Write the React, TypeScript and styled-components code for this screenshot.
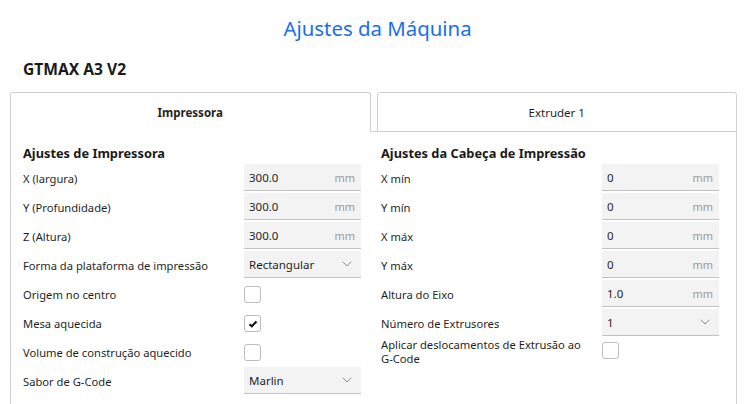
import React from "react";
import styled, { createGlobalStyle } from "styled-components";

const Global = createGlobalStyle`
  html, body { margin: 0; padding: 0; background: #ffffff; }
  body { font-family: "Noto Sans", "Open Sans", sans-serif; color: #1f1f1f; overflow: hidden; }
  * { box-sizing: border-box; }
`;

const Page = styled.div`
  width: 755px;
  height: 404px;
  overflow: hidden;
  display: flex;
  flex-direction: column;
`;

const Title = styled.h1`
  margin: 0;
  height: 56px;
  display: flex;
  align-items: center;
  justify-content: center;
  font-size: 20.4px;
  font-weight: 400;
  color: #196ef0;
`;

const Machine = styled.h2`
  margin: 0;
  padding-left: 23px;
  height: 28px;
  display: flex;
  align-items: center;
  font-size: 15.6px;
  font-weight: 700;
  color: #1a1a1a;
  position: relative;
  top: -1px;
`;

const Tabs = styled.div`
  margin: 8px 18px 0 10px;
  display: flex;
  gap: 6px;
  height: 40px;
`;

const Tab = styled.div<{ $active?: boolean }>`
  flex: 1;
  display: flex;
  align-items: center;
  justify-content: center;
  font-size: 11.5px;
  font-weight: ${(p) => (p.$active ? 700 : 400)};
  border: 1px solid #d0d0d0;
  border-bottom: ${(p) => (p.$active ? "none" : "1px solid #d0d0d0")};
  border-radius: 3px 3px 0 0;
  background: #fff;
  color: #1f1f1f;
`;

const Panel = styled.div`
  margin: 0 18px 0 10px;
  flex: 1;
  border-left: 1px solid #d0d0d0;
  border-right: 1px solid #d0d0d0;
  padding: 10px 16px 0 12px;
  display: grid;
  grid-template-columns: 338px 338px;
  column-gap: 20px;
  position: relative;
  &::before {
    content: "";
    position: absolute;
    top: -1px;
    left: 360px;
    right: -1px;
    border-top: 1px solid #d0d0d0;
  }
`;

const Column = styled.div`
  display: flex;
  flex-direction: column;
`;

const Section = styled.h3`
  margin: 0;
  font-size: 12.8px;
  font-weight: 700;
  height: 22px;
  display: flex;
  align-items: center;
  color: #1a1a1a;
`;

const Row = styled.div`
  display: grid;
  grid-template-columns: 221px 117px;
  align-items: center;
  min-height: 29px;
`;

const Label = styled.div`
  font-size: 11.2px;
  line-height: 14px;
  color: #1f1f1f;
  padding-right: 8px;
`;

const NoWrap = styled.span`
  white-space: nowrap;
`;

const Field = styled.div`
  height: 27px;
  margin-bottom: 2px;
  background: #f3f3f3;
  border-bottom: 1.5px solid #c2c2c2;
  display: flex;
  align-items: center;
  justify-content: space-between;
  padding: 0 6px 0 5px;
  font-size: 11.5px;
  color: #1f1f1f;
`;

const Unit = styled.span`
  color: #9a9a9a;
  font-size: 11px;
`;

const Chevron = styled.svg`
  width: 10px;
  height: 6px;
  margin-right: 3px;
`;

const Box = styled.div<{ $top?: boolean }>`
  width: 17px;
  height: 17px;
  margin-top: ${(p) => (p.$top ? "4px" : "0")};
  border: 1px solid #bdbdbd;
  border-radius: 3px;
  background: #fff;
  display: flex;
  align-items: center;
  justify-content: center;
`;

const CheckRow = styled(Row)<{ $top?: boolean }>`
  align-items: ${(p) => (p.$top ? "start" : "center")};
`;

type Item =
  | { kind: "num"; label: string; value: string }
  | { kind: "sel"; label: string; value: string }
  | { kind: "chk"; label: string; checked: boolean; top?: boolean };

const left: Item[] = [
  { kind: "num", label: "X (largura)", value: "300.0" },
  { kind: "num", label: "Y (Profundidade)", value: "300.0" },
  { kind: "num", label: "Z (Altura)", value: "300.0" },
  { kind: "sel", label: "Forma da plataforma de impressão", value: "Rectangular" },
  { kind: "chk", label: "Origem no centro", checked: false },
  { kind: "chk", label: "Mesa aquecida", checked: true },
  { kind: "chk", label: "Volume de construção aquecido", checked: false },
  { kind: "sel", label: "Sabor de G-Code", value: "Marlin" },
];

const right: Item[] = [
  { kind: "num", label: "X mín", value: "0" },
  { kind: "num", label: "Y mín", value: "0" },
  { kind: "num", label: "X máx", value: "0" },
  { kind: "num", label: "Y máx", value: "0" },
  { kind: "num", label: "Altura do Eixo", value: "1.0" },
  { kind: "sel", label: "Número de Extrusores", value: "1" },
  { kind: "chk", label: "Aplicar deslocamentos de Extrusão ao G-Code", checked: false, top: true },
];

function LabelText({ text }: { text: string }) {
  const words = text.split(" ");
  const last = words.pop();
  return (
    <Label>
      {words.length ? words.join(" ") + " " : ""}
      <NoWrap>{last}</NoWrap>
    </Label>
  );
}

function Control({ item }: { item: Item }) {
  if (item.kind === "num") {
    return (
      <Row>
        <LabelText text={item.label} />
        <Field>
          <span>{item.value}</span>
          <Unit>mm</Unit>
        </Field>
      </Row>
    );
  }
  if (item.kind === "sel") {
    return (
      <Row>
        <LabelText text={item.label} />
        <Field>
          <span>{item.value}</span>
          <Chevron viewBox="0 0 10 6">
            <path d="M0.8 0.8 L5 5 L9.2 0.8" fill="none" stroke="#8a8a8a" strokeWidth="1" />
          </Chevron>
        </Field>
      </Row>
    );
  }
  return (
    <CheckRow $top={item.top}>
      <LabelText text={item.label} />
      <Box $top={item.top}>
        {item.checked && (
          <svg width="10" height="8" viewBox="0 0 10 8">
            <path d="M1.5 4.2 L3.8 6.3 L8.5 1.5" fill="none" stroke="#111" strokeWidth="2" />
          </svg>
        )}
      </Box>
    </CheckRow>
  );
}

export default function App() {
  return (
    <Page>
      <Global />
      <Title>Ajustes da Máquina</Title>
      <Machine>GTMAX A3 V2</Machine>
      <Tabs>
        <Tab $active>Impressora</Tab>
        <Tab>Extruder 1</Tab>
      </Tabs>
      <Panel>
        <Column>
          <Section>Ajustes de Impressora</Section>
          {left.map((it, i) => (
            <Control key={i} item={it} />
          ))}
        </Column>
        <Column>
          <Section>Ajustes da Cabeça de Impressão</Section>
          {right.map((it, i) => (
            <Control key={i} item={it} />
          ))}
        </Column>
      </Panel>
    </Page>
  );
}
